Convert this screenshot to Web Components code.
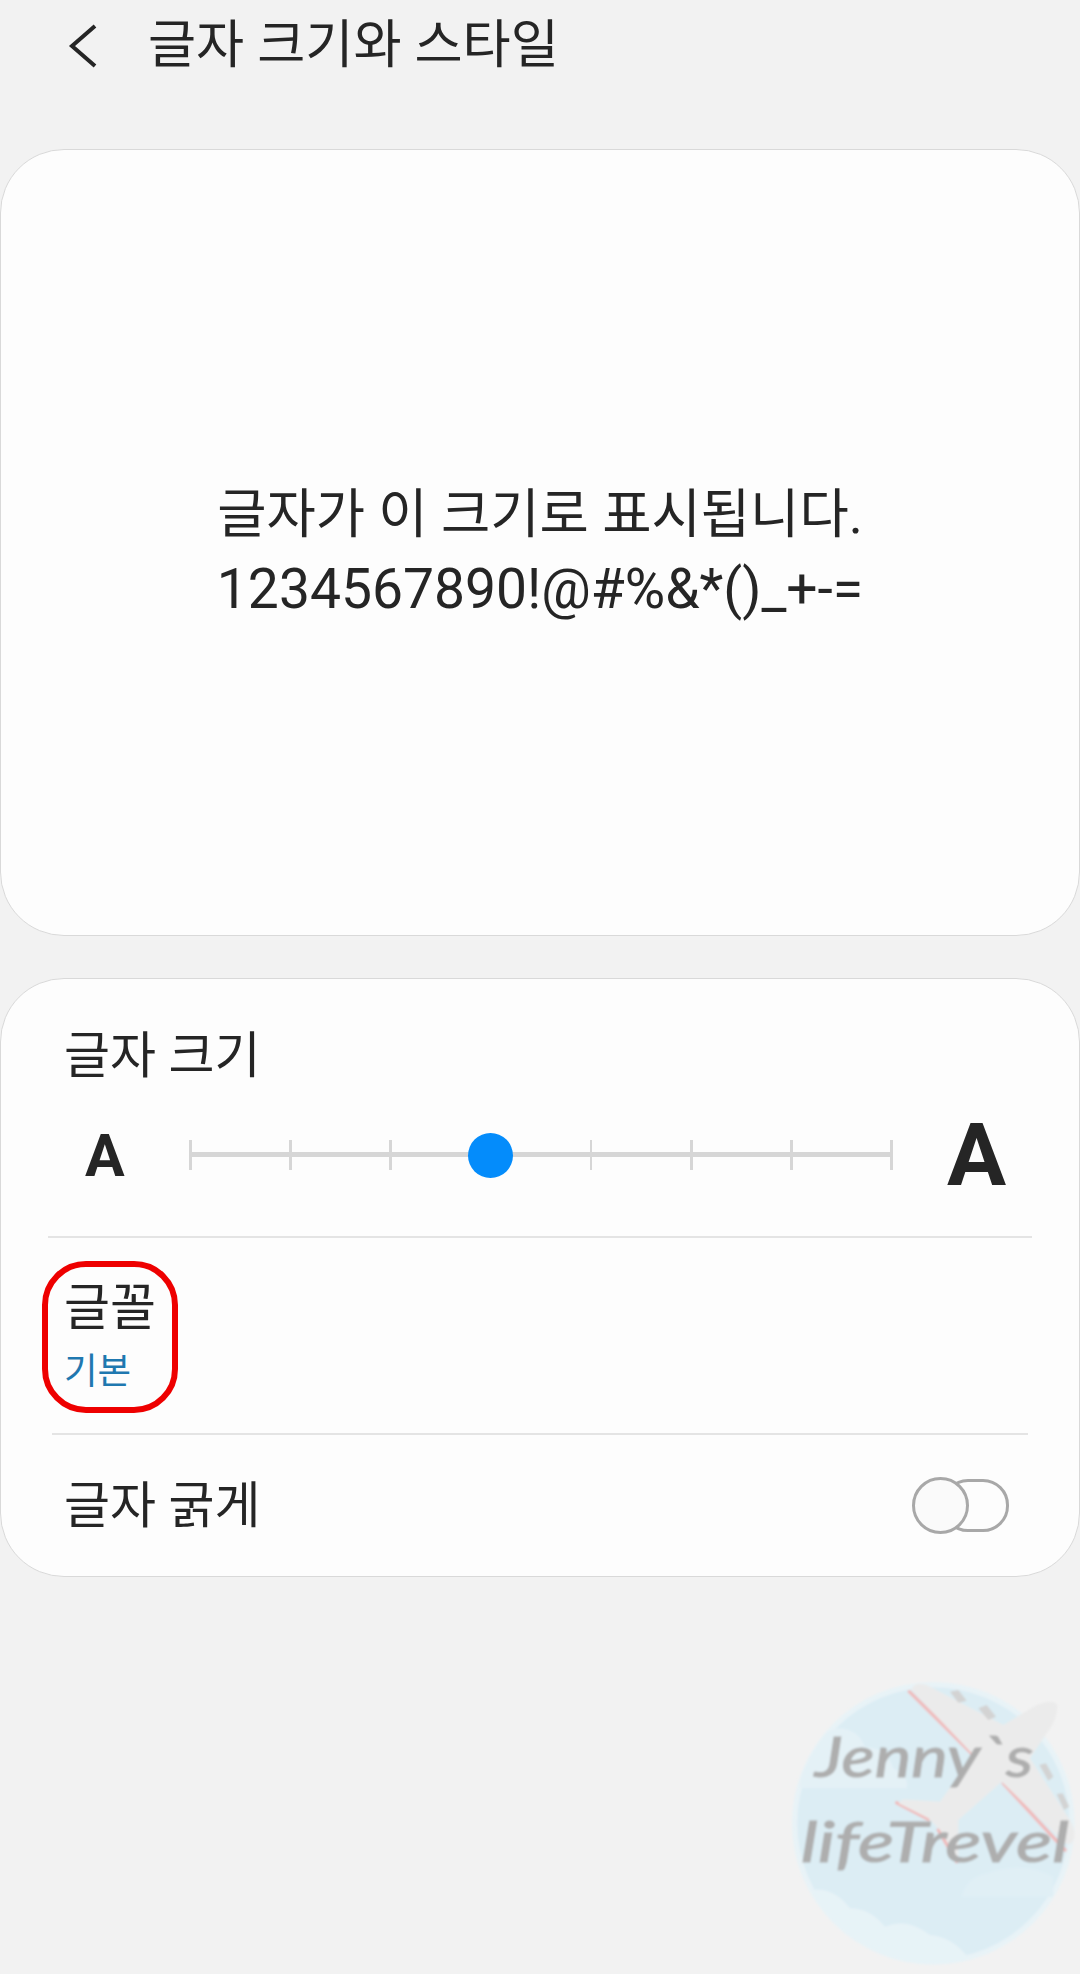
<!DOCTYPE html>
<html lang="ko">
<head>
<meta charset="utf-8">
<title>글자 크기와 스타일</title>
<style>
  html, body { margin: 0; padding: 0; background: #f2f2f2; }
  body {
    width: 1080px;
    height: 1974px;
    overflow: hidden;
    position: relative;
    color: #252525;
    font-family: Roboto, "Noto Sans CJK KR", sans-serif;
  }
</style>
</head>
<body>
  <app-header>글자 크기와 스타일</app-header>
  <preview-card>
    <span style="font-size:53.6px">글자가 이 크기로 표시됩니다.</span><br>
    <span style="font-size:55.2px">1234567890!@#%&amp;*()_+-=</span>
  </preview-card>
  <settings-card>
    <size-row>글자 크기</size-row>
    <row-divider inset="47"></row-divider>
    <font-row label="글꼴" value="기본"></font-row>
    <row-divider inset="51"></row-divider>
    <toggle-row>글자 굵게</toggle-row>
  </settings-card>
  <water-mark></water-mark>

<script>
class AppHeader extends HTMLElement {
  connectedCallback() {
    const shadow = this.attachShadow({ mode: "open" });
    shadow.innerHTML = `
      <style>
        :host {
          display: flex;
          align-items: center;
          height: 91px;
          margin-bottom: 58px;
          padding-left: 68px;
          box-sizing: border-box;
        }
        svg { width: 30px; height: 46px; flex: none; margin-right: 50px; }
        span { font-size: 52.3px; line-height: 91px; white-space: nowrap; }
      </style>
      <svg viewBox="0 0 30 46">
        <polyline points="27,3 4,23 27,43" fill="none" stroke="#252525" stroke-width="4"/>
      </svg>
      <span><slot></slot></span>
    `;
  }
}

class PreviewCard extends HTMLElement {
  connectedCallback() {
    const shadow = this.attachShadow({ mode: "open" });
    shadow.innerHTML = `
      <style>
        :host {
          display: flex;
          align-items: center;
          justify-content: center;
          height: 787px;
          margin-bottom: 42px;
          box-sizing: border-box;
          background: #fdfdfd;
          border: 1.5px solid #d9d9d9;
          border-radius: 64px;
          text-align: center;
          font-size: 54px;
          line-height: 74px;
          padding-top: 19px;
        }
      </style>
      <div><slot></slot></div>
    `;
  }
}

class SettingsCard extends HTMLElement {
  connectedCallback() {
    const shadow = this.attachShadow({ mode: "open" });
    shadow.innerHTML = `
      <style>
        :host {
          display: flex;
          flex-direction: column;
          height: 599px;
          box-sizing: border-box;
          background: #fdfdfd;
          border: 1.5px solid #d9d9d9;
          border-radius: 64px;
        }
      </style>
      <slot></slot>
    `;
  }
}

class SizeRow extends HTMLElement {
  connectedCallback() {
    const shadow = this.attachShadow({ mode: "open" });
    const ticks = [0, 1, 2, 3, 4, 5, 6, 7].map(() => "<i></i>").join("");
    shadow.innerHTML = `
      <style>
        :host {
          display: flex;
          flex-direction: column;
          height: 257px;
          box-sizing: border-box;
          padding: 44px 0 0 63px;
        }
        .label { font-size: 50px; line-height: 66px; height: 66px; white-space: nowrap; }
        .controls {
          display: flex;
          align-items: center;
          height: 90px;
          margin-top: 21px;
        }
        .small { font-size: 59px; font-weight: 700; width: 62px; margin-left: 21px; line-height: 1; }
        .big { font-size: 88px; font-weight: 700; margin-left: 54px; line-height: 1; }
        .slider {
          position: relative;
          display: flex;
          justify-content: space-between;
          align-items: center;
          width: 704px;
          height: 30px;
          margin-left: 42px;
        }
        .slider::before {
          content: "";
          position: absolute;
          left: 0;
          right: 0;
          top: 12px;
          height: 5px;
          background: #d6d6d6;
        }
        i { display: block; width: 2.5px; height: 30px; background: #d6d6d6; position: relative; }
        .thumb {
          position: absolute;
          left: 279px;
          top: -7px;
          width: 45px;
          height: 45px;
          border-radius: 50%;
          background: #048cfb;
        }
      </style>
      <div class="label"><slot></slot></div>
      <div class="controls">
        <span class="small">A</span>
        <div class="slider">${ticks}<div class="thumb"></div></div>
        <span class="big">A</span>
      </div>
    `;
  }
}

class RowDivider extends HTMLElement {
  connectedCallback() {
    const shadow = this.attachShadow({ mode: "open" });
    const inset = this.getAttribute("inset") || "47";
    shadow.innerHTML = `
      <style>
        :host { display: block; padding: 0 ${inset}px; }
        div { height: 2px; background: #e4e4e4; }
      </style>
      <div></div>
    `;
  }
}

class FontRow extends HTMLElement {
  connectedCallback() {
    const shadow = this.attachShadow({ mode: "open" });
    shadow.innerHTML = `
      <style>
        :host {
          display: block;
          position: relative;
          height: 195px;
          box-sizing: border-box;
          padding: 37px 0 0 63px;
        }
        .label { font-size: 50px; line-height: 66px; height: 66px; }
        .value { font-size: 36.5px; line-height: 50px; margin-top: 6px; color: #1f78b0; }
        .mark {
          position: absolute;
          left: 41px;
          top: 23px;
          width: 136px;
          height: 152px;
          box-sizing: border-box;
          border: 6px solid #ee0000;
          border-radius: 44px;
        }
      </style>
      <div class="label">${this.getAttribute("label")}</div>
      <div class="value">${this.getAttribute("value")}</div>
      <div class="mark"></div>
    `;
  }
}

class ToggleRow extends HTMLElement {
  connectedCallback() {
    const shadow = this.attachShadow({ mode: "open" });
    shadow.innerHTML = `
      <style>
        :host {
          display: flex;
          align-items: center;
          justify-content: space-between;
          flex: 1;
          box-sizing: border-box;
          padding: 0 70px 0 63px;
        }
        .label { font-size: 50px; line-height: 66px; }
        .toggle { position: relative; width: 97px; height: 57px; }
        .track {
          position: absolute;
          left: 30px;
          right: 0;
          top: 2px;
          bottom: 2px;
          box-sizing: border-box;
          border: 3px solid #a8a8a8;
          border-radius: 26px;
        }
        .knob {
          position: absolute;
          left: 0;
          top: 0;
          width: 57px;
          height: 57px;
          box-sizing: border-box;
          border: 3px solid #a8a8a8;
          border-radius: 50%;
          background: #fafafa;
        }
      </style>
      <div class="label"><slot></slot></div>
      <div class="toggle"><div class="track"></div><div class="knob"></div></div>
    `;
  }
}

class WaterMark extends HTMLElement {
  connectedCallback() {
    const shadow = this.attachShadow({ mode: "open" });
    shadow.innerHTML = `
      <style>
        :host { position: absolute; left: 770px; top: 1660px; width: 310px; height: 314px; display: block; }
        svg { display: block; width: 310px; height: 314px; }
        text { font-family: Lato, sans-serif; font-style: italic; fill: #aeaeae; stroke: #aeaeae; stroke-width: 3px; }
      </style>
      <svg viewBox="0 0 930 942">
        <defs>
          <clipPath id="disc"><circle cx="490" cy="490" r="420"/></clipPath>
          <filter id="soft"><feGaussianBlur stdDeviation="3"/></filter>
        </defs>
        <g filter="url(#soft)">
          <circle cx="490" cy="490" r="424" fill="#e8f3f7"/>
          <circle cx="490" cy="490" r="408" fill="#dcedf4"/>
          <g clip-path="url(#disc)" fill="#e4f1f6">
            <path d="M90 385 V300 Q130 220 205 205 Q265 205 285 262 Q350 260 370 325 Q420 350 410 385 Z"/>
            <path d="M125 690 Q190 680 240 745 Q300 745 345 800 Q410 770 480 825 Q550 830 600 900 L500 950 L200 900 Z" fill="#e7f3f7"/>
            <path d="M575 710 Q590 650 650 640 Q760 600 850 650 V710 Z" fill="#e0eff5"/>
          </g>
          <path d="M418 95 L610 285 M700 370 L885 570 M380 428 L475 478 M505 510 L560 605" stroke="#f0baba" stroke-width="10" stroke-linecap="round" fill="none"/>
          <path d="M425 90 Q430 65 470 75 L700 195 L800 135 Q850 115 862 135 Q865 175 830 220 L780 295 L900 480 Q925 525 905 550 Q885 560 860 525 L695 365 L610 440 L565 480 L565 600 L510 510 L475 475 L385 430 L400 418 L510 425 L610 285 Z" fill="#ebebeb"/>
          <path d="M540 95 L565 90 L590 122 L565 128 Z M625 145 L650 135 L678 170 L655 180 Z M808 315 L828 310 L850 350 L835 362 Z M860 402 L878 400 L898 440 L882 450 Z" fill="#d3d3d3"/>
          <text x="135" y="350" font-size="170" textLength="655" lengthAdjust="spacingAndGlyphs">Jenny\`s</text>
          <text x="92" y="605" font-size="170" textLength="805" lengthAdjust="spacingAndGlyphs">lifeTrevel</text>
        </g>
      </svg>
    `;
  }
}

customElements.define("app-header", AppHeader);
customElements.define("preview-card", PreviewCard);
customElements.define("settings-card", SettingsCard);
customElements.define("size-row", SizeRow);
customElements.define("row-divider", RowDivider);
customElements.define("font-row", FontRow);
customElements.define("toggle-row", ToggleRow);
customElements.define("water-mark", WaterMark);
</script>
</body>
</html>
